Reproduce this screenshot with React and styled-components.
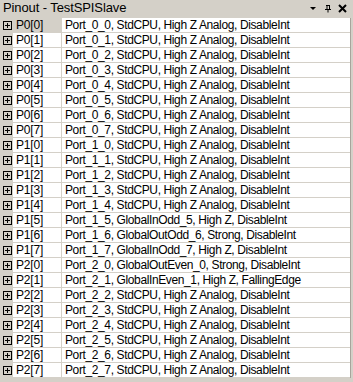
import React from 'react';
import styled, { createGlobalStyle } from 'styled-components';

const pins = [
  ['P0[0]', 'Port_0_0, StdCPU, High Z Analog, DisableInt'],
  ['P0[1]', 'Port_0_1, StdCPU, High Z Analog, DisableInt'],
  ['P0[2]', 'Port_0_2, StdCPU, High Z Analog, DisableInt'],
  ['P0[3]', 'Port_0_3, StdCPU, High Z Analog, DisableInt'],
  ['P0[4]', 'Port_0_4, StdCPU, High Z Analog, DisableInt'],
  ['P0[5]', 'Port_0_5, StdCPU, High Z Analog, DisableInt'],
  ['P0[6]', 'Port_0_6, StdCPU, High Z Analog, DisableInt'],
  ['P0[7]', 'Port_0_7, StdCPU, High Z Analog, DisableInt'],
  ['P1[0]', 'Port_1_0, StdCPU, High Z Analog, DisableInt'],
  ['P1[1]', 'Port_1_1, StdCPU, High Z Analog, DisableInt'],
  ['P1[2]', 'Port_1_2, StdCPU, High Z Analog, DisableInt'],
  ['P1[3]', 'Port_1_3, StdCPU, High Z Analog, DisableInt'],
  ['P1[4]', 'Port_1_4, StdCPU, High Z Analog, DisableInt'],
  ['P1[5]', 'Port_1_5, GlobalInOdd_5, High Z, DisableInt'],
  ['P1[6]', 'Port_1_6, GlobalOutOdd_6, Strong, DisableInt'],
  ['P1[7]', 'Port_1_7, GlobalInOdd_7, High Z, DisableInt'],
  ['P2[0]', 'Port_2_0, GlobalOutEven_0, Strong, DisableInt'],
  ['P2[1]', 'Port_2_1, GlobalInEven_1, High Z, FallingEdge'],
  ['P2[2]', 'Port_2_2, StdCPU, High Z Analog, DisableInt'],
  ['P2[3]', 'Port_2_3, StdCPU, High Z Analog, DisableInt'],
  ['P2[4]', 'Port_2_4, StdCPU, High Z Analog, DisableInt'],
  ['P2[5]', 'Port_2_5, StdCPU, High Z Analog, DisableInt'],
  ['P2[6]', 'Port_2_6, StdCPU, High Z Analog, DisableInt'],
  ['P2[7]', 'Port_2_7, StdCPU, High Z Analog, DisableInt'],
];

const App = () => (
  <>
    <GlobalStyle />
    <Panel>
      <TitleBar>
        <Title>Pinout - TestSPISlave</Title>
        <Buttons>
          <svg width="8" height="8" viewBox="0 0 8 8">
            <path d="M1 3h6L4 6z" fill="#000" />
          </svg>
          <svg width="8" height="9" viewBox="0 0 8 9">
            <path d="M2 1.5h4M3 1.5v4M5.5 1.5v4M1 5.5h6M4 5.5v3" stroke="#000" strokeWidth="1" fill="none" />
          </svg>
          <svg width="9" height="9" viewBox="0 0 9 9">
            <path d="M1 1l7 7M8 1l-7 7" stroke="#000" strokeWidth="2" fill="none" />
          </svg>
        </Buttons>
      </TitleBar>
      <List>
        {pins.map(([name, value], i) => (
          <Row key={name}>
            <Gutter>
              <Expander />
            </Gutter>
            <NameCell selected={i === 0}>{name}</NameCell>
            <ValueCell>{value}</ValueCell>
          </Row>
        ))}
      </List>
    </Panel>
  </>
);

//#region styles
const GlobalStyle = createGlobalStyle`
  html, body {
    margin: 0;
    padding: 0;
    background: #d4d0c8;
  }
`;

const Panel = styled.div`
  width: 353px;
  height: 382px;
  background: #d4d0c8;
  display: flex;
  flex-direction: column;
  font-family: "Liberation Sans", Arial, sans-serif;
  font-size: 12px;
  color: #000;
  overflow: hidden;
`;

const TitleBar = styled.div`
  height: 18px;
  display: flex;
  align-items: center;
  justify-content: space-between;
  padding: 0 5px 0 3px;
  box-sizing: border-box;
`;

const Title = styled.span`
  font-size: 13px;
  letter-spacing: -0.1px;
  line-height: 18px;
  margin-top: -2px;
`;

const Buttons = styled.div`
  display: flex;
  align-items: center;
  gap: 6px;
  margin-top: -2px;
  margin-right: 1px;
  & > svg:first-child {
    margin-right: 1px;
  }
`;

const List = styled.div`
  display: flex;
  flex-direction: column;
  margin-right: 2px;
  border-right: 1px solid #a8a49c;
`;

const Row = styled.div`
  display: grid;
  grid-template-columns: 13px 49px 1fr;
  height: 15px;
`;

const Gutter = styled.div`
  display: flex;
  align-items: center;
  justify-content: center;
  padding-left: 1px;
`;

const Expander = styled.span`
  width: 7px;
  height: 7px;
  border: 1px solid #000;
  position: relative;
  &::before,
  &::after {
    content: '';
    position: absolute;
    background: #000;
  }
  &::before {
    left: 1px;
    top: 3px;
    width: 5px;
    height: 1px;
  }
  &::after {
    left: 3px;
    top: 1px;
    width: 1px;
    height: 5px;
  }
`;

const NameCell = styled.div`
  background: ${(p) => (p.selected ? '#d4d0c8' : '#fff')};
  border-bottom: 1px solid #d4d0c8;
  border-right: 1px solid #d4d0c8;
  padding-left: 3px;
  line-height: 14px;
  letter-spacing: -0.2px;
  white-space: nowrap;
  overflow: hidden;
`;

const ValueCell = styled.div`
  background: #fff;
  border-bottom: 1px solid #d4d0c8;
  padding-left: 3px;
  line-height: 14px;
  letter-spacing: -0.38px;
  white-space: nowrap;
  overflow: hidden;
`;
//#endregion

export default App;
